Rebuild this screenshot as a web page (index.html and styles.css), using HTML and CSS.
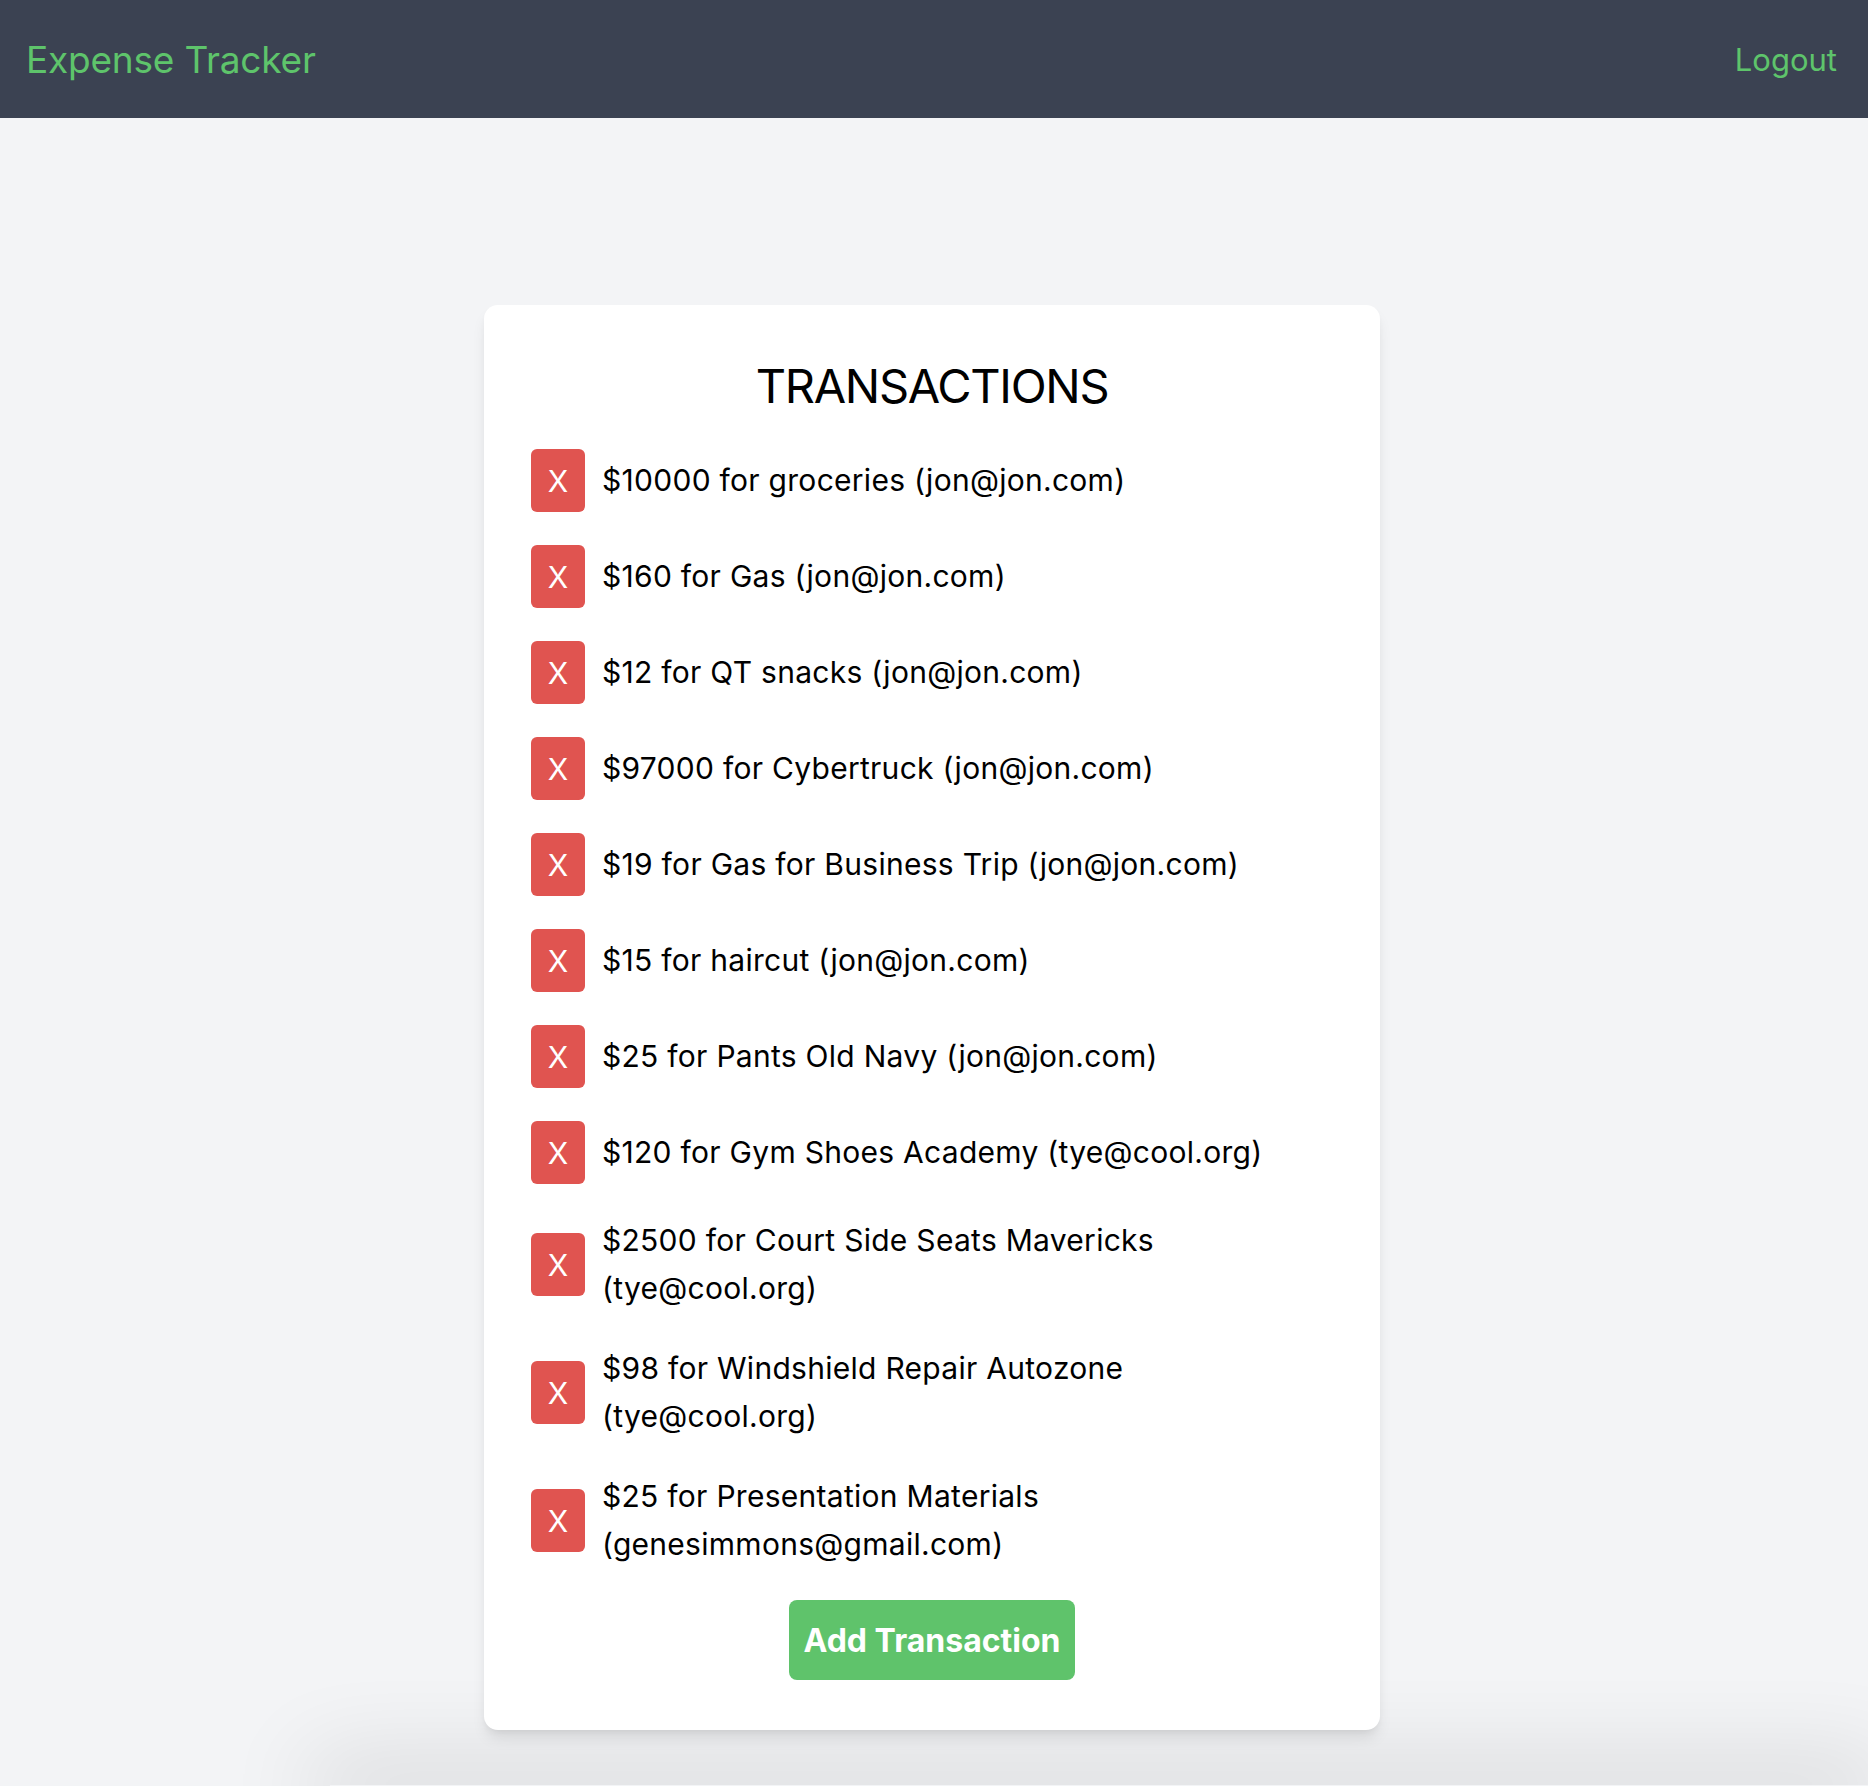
FILE: index.html
```html
<!DOCTYPE html>
<html lang="en">
<head>
<meta charset="utf-8">
<title>Expense Tracker</title>
<link rel="stylesheet" href="styles.css">
</head>
<body>
<header class="topbar">
  <a class="brand" href="#">Expense Tracker</a>
  <a class="logout" href="#">Logout</a>
</header>
<main class="main">
  <section class="card">
    <h1 class="title">TRANSACTIONS</h1>
    <ul class="list">
      <li class="item"><button class="del">X</button><span class="desc">$10000 for groceries (jon@jon.com)</span></li>
      <li class="item"><button class="del">X</button><span class="desc">$160 for Gas (jon@jon.com)</span></li>
      <li class="item"><button class="del">X</button><span class="desc">$12 for QT snacks (jon@jon.com)</span></li>
      <li class="item"><button class="del">X</button><span class="desc">$97000 for Cybertruck (jon@jon.com)</span></li>
      <li class="item"><button class="del">X</button><span class="desc">$19 for Gas for Business Trip (jon@jon.com)</span></li>
      <li class="item"><button class="del">X</button><span class="desc">$15 for haircut (jon@jon.com)</span></li>
      <li class="item"><button class="del">X</button><span class="desc">$25 for Pants Old Navy (jon@jon.com)</span></li>
      <li class="item"><button class="del">X</button><span class="desc">$120 for Gym Shoes Academy (tye@cool.org)</span></li>
      <li class="item"><button class="del">X</button><span class="desc">$2500 for Court Side Seats Mavericks (tye@cool.org)</span></li>
      <li class="item"><button class="del">X</button><span class="desc">$98 for Windshield Repair Autozone (tye@cool.org)</span></li>
      <li class="item"><button class="del">X</button><span class="desc">$25 for Presentation Materials (genesimmons@gmail.com)</span></li>
    </ul>
    <div class="actions"><button class="add">Add Transaction</button></div>
  </section>
  <div class="below"></div>
</main>
</body>
</html>
```
FILE: styles.css
```css
html { overflow: hidden; }
body {
  margin: 0;
  background: #f3f4f6;
  font-family: Inter, "Noto Sans", "Liberation Sans", sans-serif;
  color: #000;
}
.topbar {
  height: 118px;
  background: #3b4252;
  display: flex;
  align-items: center;
  justify-content: space-between;
  padding: 0 31px 0 26px;
}
.brand, .logout {
  color: #5ec46b;
  text-decoration: none;
}
.brand { font-size: 37px; letter-spacing: -0.2px; }
.logout { font-size: 31px; }
.main {
  padding-top: 187px;
  min-height: calc(100vh - 118px);
  box-sizing: border-box;
  display: flex;
  flex-direction: column;
}
.card {
  width: 896px;
  box-sizing: border-box;
  margin: 0 auto;
  transform: translateX(-2px);
  background: #fff;
  border-radius: 14px;
  box-shadow: 0 10px 15px -3px rgba(0,0,0,0.1), 0 4px 6px -2px rgba(0,0,0,0.05);
  padding: 48px 47px 50px;
}
.title {
  margin: 0 0 30px;
  text-align: center;
  font-weight: 400;
  font-size: 47px;
  letter-spacing: -1.3px;
  line-height: 66px;
}
.list {
  list-style: none;
  margin: 0;
  padding: 0;
  display: flex;
  flex-direction: column;
  gap: 33px;
}
.item {
  display: flex;
  align-items: center;
  gap: 17px;
}
.del {
  flex: none;
  width: 54px;
  height: 63px;
  border: 0;
  border-radius: 6px;
  background: #e05450;
  color: #fff;
  font-family: inherit;
  font-size: 30px;
  padding: 0;
}
.desc {
  font-size: 30px;
  letter-spacing: 0.28px;
  line-height: 47.5px;
}
.actions {
  display: flex;
  justify-content: center;
  margin-top: 32px;
}
.add {
  width: 286px;
  height: 80px;
  border: 0;
  border-radius: 8px;
  background: #5fc36b;
  color: #fff;
  font-family: inherit;
  font-weight: 700;
  font-size: 32px;
  padding: 0;
}
.below {
  flex: none;
  height: 1px;
  margin: auto 0 0 330px;
  background: #f3f4f6;
  box-shadow: 0 0 90px 20px rgba(0,0,0,0.16);
}
```
